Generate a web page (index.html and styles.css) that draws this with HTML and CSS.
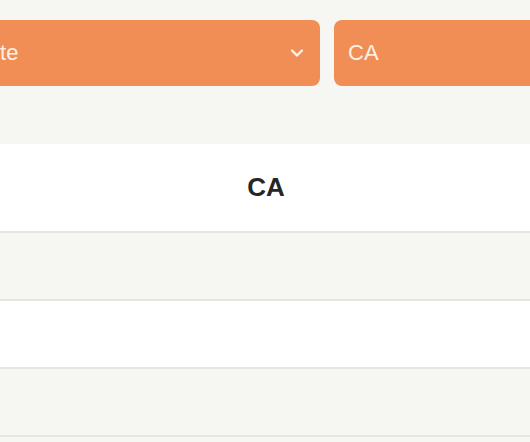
FILE: index.html
```html
<!DOCTYPE html>
<html>
<head>
<meta charset="utf-8">
<link rel="stylesheet" href="styles.css">
</head>
<body>
<div class="controls">
  <div class="select">
    <span class="label">State</span>
    <svg class="chev" width="14" height="10" viewBox="0 0 14 10"><path d="M2 2.5 L7 7.5 L12 2.5" fill="none" stroke="#fdf3ea" stroke-width="2.4" stroke-linecap="round" stroke-linejoin="round"/></svg>
  </div>
  <div class="input"><span class="label">CA</span></div>
</div>
<div class="table">
  <div class="row head">CA</div>
  <div class="row alt"></div>
  <div class="row"></div>
  <div class="row alt"></div>
</div>
</body>
</html>
```
FILE: styles.css
```css
html, body {
  margin: 0;
  padding: 0;
  background: #f6f6f2;
  font-family: "Liberation Sans", Arial, sans-serif;
  overflow: hidden;
}
.controls {
  display: flex;
  gap: 14px;
  padding-top: 20px;
  margin-left: -47px;
}
.select, .input {
  height: 66px;
  box-sizing: border-box;
  background: #f08e56;
  border-radius: 8px;
  display: flex;
  align-items: center;
  padding: 0 14px;
  color: #fdf1e6;
  font-size: 22px;
  flex-shrink: 0;
}
.select {
  width: 367px;
  justify-content: space-between;
  padding-right: 16px;
}
.input {
  width: 300px;
}
.chev {
  display: block;
}
.table {
  margin-top: 58px;
}
.row {
  height: 66px;
  border-bottom: 2px solid #e7e7e2;
  background: #ffffff;
}
.row.alt {
  background: #f6f6f2;
}
.row.head {
  height: 87px;
  display: flex;
  align-items: center;
  justify-content: center;
  font-weight: bold;
  font-size: 26px;
  color: #262626;
  padding-left: 2px;
}
```
